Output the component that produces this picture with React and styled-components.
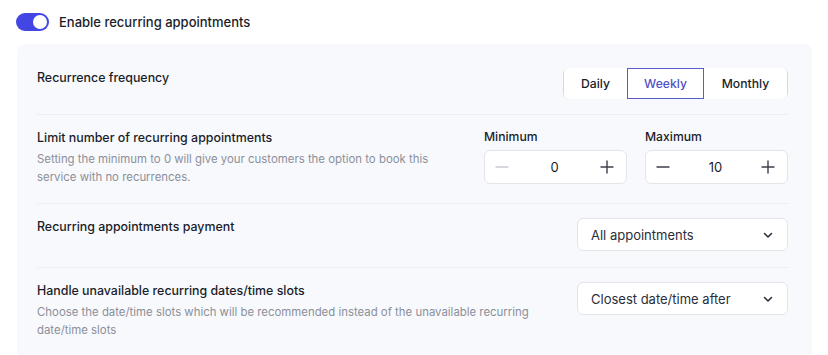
import React, { useState } from 'react';
import styled, { createGlobalStyle } from 'styled-components';

const Global = createGlobalStyle`
  body {
    margin: 0;
    background: #fff;
    font-family: Inter, "Noto Sans", sans-serif;
    color: #1f2430;
  }
`;

const Page = styled.div`
  width: 828px;
  height: 355px;
  overflow: hidden;
  padding: 13px 16px 0 16px;
  box-sizing: border-box;
`;

const ToggleRow = styled.label`
  display: flex;
  align-items: center;
  gap: 10px;
  font-size: 13px;
  font-weight: 500;
  color: #1a1d29;
  height: 18px;
`;

const Switch = styled.span`
  position: relative;
  width: 33px;
  height: 18px;
  border-radius: 9px;
  background: ${p => (p.on ? '#4346e2' : '#d1d5db')};
  flex-shrink: 0;
  &::after {
    content: '';
    position: absolute;
    top: 2px;
    left: ${p => (p.on ? '17px' : '2px')};
    width: 14px;
    height: 14px;
    border-radius: 50%;
    background: #fff;
  }
`;

const Panel = styled.div`
  margin-top: 13px;
  margin-left: 1px;
  width: 795px;
  background: #f8f9fd;
  border-radius: 8px 8px 0 0;
  padding: 7px 24px 0 20px;
  box-sizing: border-box;
  min-height: 320px;
`;

const Row = styled.div`
  display: flex;
  align-items: flex-start;
  justify-content: space-between;
  gap: 20px;
  padding: ${p => p.pad || '15px 0 15px'};
  border-top: ${p => (p.first ? 'none' : '1px solid #eceef4')};
`;

const Info = styled.div`
  flex: 1;
  min-width: 0;
  padding-top: ${p => p.offset || 0}px;
`;

const Title = styled.div`
  font-size: 12.4px;
  font-weight: 500;
  line-height: 18px;
  color: #1a1d29;
`;

const Desc = styled.div`
  margin-top: 3px;
  font-size: 11.4px;
  line-height: 18px;
  color: #8b8f99;
`;

const Segmented = styled.div`
  display: flex;
  flex-shrink: 0;
  border: 1px solid #d6d9e0;
  border-radius: 6px;
  background: #fff;
  height: 31px;
  box-sizing: border-box;
`;

const Segment = styled.button`
  border: 1px solid ${p => (p.active ? '#5b5bd0' : 'transparent')};
  border-left: 1px solid ${p => (p.active ? '#5b5bd0' : p.divider ? '#d6d9e0' : 'transparent')};
  margin: -1px 0;
  background: #fff;
  font-family: inherit;
  font-size: 12.2px;
  font-weight: 500;
  color: ${p => (p.active ? '#5151c6' : '#1a1d29')};
  width: ${p => p.w}px;
  padding: 0;
  cursor: pointer;
  border-radius: ${p => p.radius || '0'};
`;

const Limits = styled.div`
  display: flex;
  gap: 18px;
  flex-shrink: 0;
`;

const Field = styled.div`
  display: flex;
  flex-direction: column;
  gap: 5px;
`;

const FieldLabel = styled.div`
  font-size: 12.2px;
  font-weight: 500;
  line-height: 16px;
  color: #1a1d29;
`;

const Stepper = styled.div`
  display: flex;
  align-items: center;
  justify-content: space-between;
  width: 143px;
  height: 34px;
  box-sizing: border-box;
  background: #fff;
  border: 1px solid #e3e5eb;
  border-radius: 6px;
  padding: 0 10px 0 8px;
`;

const StepBtn = styled.button`
  border: none;
  background: none;
  padding: 0;
  width: 18px;
  height: 18px;
  display: flex;
  align-items: center;
  justify-content: center;
  color: ${p => (p.disabled ? '#c9ccd3' : '#3b3f4a')};
`;

const StepValue = styled.span`
  font-size: 13px;
  color: #1a1d29;
`;

const Select = styled.div`
  flex-shrink: 0;
  display: flex;
  align-items: center;
  justify-content: space-between;
  width: 211px;
  height: 33px;
  box-sizing: border-box;
  background: #fff;
  border: 1px solid #e3e5eb;
  border-radius: 6px;
  padding: 0 13px 0 13px;
  font-size: 13px;
  color: #2a2e3a;
`;

const Minus = () => (
  <svg width="14" height="14" viewBox="0 0 14 14">
    <path d="M1 7h12" stroke="currentColor" strokeWidth="1.4" strokeLinecap="round" />
  </svg>
);

const Plus = () => (
  <svg width="14" height="14" viewBox="0 0 14 14">
    <path d="M1 7h12M7 1v12" stroke="currentColor" strokeWidth="1.4" strokeLinecap="round" />
  </svg>
);

const Chevron = () => (
  <svg width="12" height="12" viewBox="0 0 12 12">
    <path d="M2.5 4.5L6 8l3.5-3.5" fill="none" stroke="#2a2e3a" strokeWidth="1.6" strokeLinecap="round" strokeLinejoin="round" />
  </svg>
);

const NumberField = ({ label, value, min }) => (
  <Field>
    <FieldLabel>{label}</FieldLabel>
    <Stepper>
      <StepBtn disabled={value <= min}><Minus /></StepBtn>
      <StepValue>{value}</StepValue>
      <StepBtn><Plus /></StepBtn>
    </Stepper>
  </Field>
);

export default function App() {
  const [freq, setFreq] = useState('Weekly');
  const options = [
    { name: 'Daily', w: 63, radius: '5px 0 0 5px' },
    { name: 'Weekly', w: 77 },
    { name: 'Monthly', w: 83, radius: '0 5px 5px 0' },
  ];

  return (
    <Page>
      <Global />
      <ToggleRow>
        <Switch on />
        Enable recurring appointments
      </ToggleRow>
      <Panel>
        <Row first pad="17px 0 15px">
          <Info offset={1}>
            <Title>Recurrence frequency</Title>
          </Info>
          <Segmented>
            {options.map((o, i) => (
              <Segment
                key={o.name}
                w={o.w}
                radius={o.radius}
                divider={i > 0 && freq !== options[i - 1].name}
                active={freq === o.name}
                onClick={() => setFreq(o.name)}
              >
                {o.name}
              </Segment>
            ))}
          </Segmented>
        </Row>
        <Row pad="14px 0 17px">
          <Info>
            <Title>Limit number of recurring appointments</Title>
            <Desc>
              Setting the minimum to 0 will give your customers the option to book this service with no recurrences.
            </Desc>
          </Info>
          <Limits>
            <NumberField label="Minimum" value={0} min={0} />
            <NumberField label="Maximum" value={10} min={0} />
          </Limits>
        </Row>
        <Row pad="14px 0 16px">
          <Info>
            <Title>Recurring appointments payment</Title>
          </Info>
          <Select>
            All appointments
            <Chevron />
          </Select>
        </Row>
        <Row pad="14px 0 15px">
          <Info>
            <Title>Handle unavailable recurring dates/time slots</Title>
            <Desc>
              Choose the date/time slots which will be recommended instead of the unavailable recurring date/time slots
            </Desc>
          </Info>
          <Select>
            Closest date/time after
            <Chevron />
          </Select>
        </Row>
      </Panel>
    </Page>
  );
}
